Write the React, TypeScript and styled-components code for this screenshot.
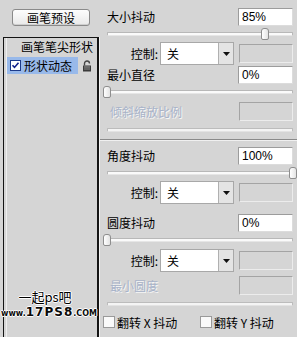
import styled, { createGlobalStyle } from 'styled-components'

const BG = '#d5d5d5'
const CJK = `'Noto Sans CJK SC', 'Noto Sans', sans-serif`

const GlobalStyle = createGlobalStyle`
	html, body {
		margin: 0;
		padding: 0;
		background: ${BG};
	}
	body {
		font-family: ${CJK};
		font-size: 12px;
		color: #000;
	}
`

type Param = { label: string; value: string; level: number }

const SliderBar = ({ level, muted }: { level?: number; muted?: boolean }) => (
	<SliderRow $muted={muted}>
		<Track />
		{level !== undefined && <Thumb style={{ left: `calc(${level}% - 4px)` }} />}
	</SliderRow>
)

const ParamRow = ({ label, value }: { label: string; value: string }) => (
	<LabelRow>
		<Label>{label}</Label>
		<ValueBox>{value}</ValueBox>
	</LabelRow>
)

const ControlRow = ({ top }: { top?: number }) => (
	<Control $top={top}>
		<ControlLabel>控制:</ControlLabel>
		<Select>
			<SelectText>关</SelectText>
			<SelectArrow>
				<svg width='7' height='4' viewBox='0 0 7 4'>
					<path d='M0 0h7L3.5 4z' fill='#111' />
				</svg>
			</SelectArrow>
		</Select>
		<DisabledBox />
	</Control>
)

const LockIcon = () => (
	<svg width='10' height='12' viewBox='0 0 10 12'>
		<path d='M2.5 5.5V3.5a2.5 2.5 0 0 1 5 0' stroke='#444' strokeWidth='1.4' fill='none' />
		<rect x='1' y='5.5' width='8' height='6' fill='#3a3a3a' />
		<rect x='2' y='6.5' width='6' height='1' fill='#9a9a9a' />
		<rect x='2' y='8.5' width='6' height='1' fill='#8a8a8a' />
	</svg>
)

const CheckMark = () => (
	<svg width='11' height='11' viewBox='0 0 11 11'>
		<rect x='0.5' y='0.5' width='10' height='10' fill='#fff' stroke='#1c3a8a' />
		<path d='M2.5 5.2l2 2.2 4-4.6' stroke='#10208a' strokeWidth='1.6' fill='none' />
	</svg>
)

export default function App() {
	const size: Param = { label: '大小抖动', value: '85%', level: 85 }
	const angle: Param = { label: '角度抖动', value: '100%', level: 100 }
	const roundness: Param = { label: '圆度抖动', value: '0%', level: 0 }

	return (
		<>
			<GlobalStyle />
			<Root>
				<LeftColumn>
					<PresetButton>画笔预设</PresetButton>
					<BrushPanel>
						<TipRow>画笔笔尖形状</TipRow>
						<DynamicsRow>
							<Highlight>
								<CheckMark />
								<span>形状动态</span>
							</Highlight>
							<LockIcon />
						</DynamicsRow>
						<Watermark>
							<WatermarkTitle>一起ps吧</WatermarkTitle>
							<WatermarkUrl>
								<small>www.</small>
								<b>17PS8</b>
								<small>.COM</small>
							</WatermarkUrl>
						</Watermark>
					</BrushPanel>
				</LeftColumn>

				<RightColumn>
					<ParamRow label={size.label} value={size.value} />
					<SliderBar level={size.level} />
					<ControlRow />
					<ParamRow label='最小直径' value='0%' />
					<SliderBar level={0} />
					<DisabledRow>
						<DisabledLabel>倾斜缩放比例</DisabledLabel>
						<DisabledBox />
					</DisabledRow>
					<SliderBar muted />
					<Separator />
					<ParamRow label={angle.label} value={angle.value} />
					<SliderBar level={angle.level} />
					<ControlRow />
					<Spacer $h={9} />
					<ParamRow label={roundness.label} value={roundness.value} />
					<SliderBar level={roundness.level} />
					<ControlRow top={1} />
					<DisabledRow $top={2}>
						<DisabledLabel>最小圆度</DisabledLabel>
						<DisabledBox />
					</DisabledRow>
					<SliderBar muted />
					<FlipRow>
						<FlipItem>
							<Box />
							翻转 X 抖动
						</FlipItem>
						<FlipItem>
							<Box />
							翻转 Y 抖动
						</FlipItem>
					</FlipRow>
				</RightColumn>
			</Root>
		</>
	)
}

const Root = styled.div`
	display: flex;
	width: 297px;
	height: 337px;
	overflow: hidden;
	background: ${BG};
`

const LeftColumn = styled.div`
	width: 100px;
	flex-shrink: 0;
	display: flex;
	flex-direction: column;
`

const PresetButton = styled.div`
	margin: 9px 0 0 12px;
	width: 76px;
	height: 15px;
	border: 1px solid #8a8a8a;
	border-radius: 3px;
	background: linear-gradient(#fdfdfd, #e9e9e9);
	box-shadow: inset 0 -1px 0 #cfcfcf;
	display: flex;
	align-items: center;
	justify-content: center;
	font-size: 12px;
	line-height: 1;
`

const BrushPanel = styled.div`
	margin: 11px 0 0 3px;
	width: 93px;
	flex: 1;
	border: 1px solid #141414;
	border-right-width: 2px;
	border-bottom: none;
	box-shadow: inset 2px 0 0 ${BG}, inset 3px 0 0 #eeeeee, 1px 0 0 #f2f2f2;
	display: flex;
	flex-direction: column;
`

const TipRow = styled.div`
	height: 18px;
	line-height: 18px;
	text-align: right;
	padding-right: 4px;
`

const DynamicsRow = styled.div`
	display: flex;
	align-items: center;
	height: 17px;
	margin: 1px 0 0 3px;
	gap: 4px;
`

const Highlight = styled.div`
	width: 68px;
	height: 17px;
	padding-left: 3px;
	background: #98b9ea;
	display: flex;
	align-items: center;
	gap: 3px;
`

const Watermark = styled.div`
	margin: auto 0 17px -3px;
	display: flex;
	flex-direction: column;
	align-items: center;
	gap: 3px;
	text-shadow: 1px 0 0 #fff, -1px 0 0 #fff, 0 1px 0 #fff, 0 -1px 0 #fff;
`

const WatermarkTitle = styled.div`
	font-size: 13px;
	line-height: 13px;
	margin-left: -8px;
`

const WatermarkUrl = styled.div`
	font-family: 'DejaVu Sans', sans-serif;
	line-height: 12px;
	white-space: nowrap;
	color: #0a0a0a;
	small {
		font-size: 8px;
		font-weight: bold;
	}
	b {
		font-size: 12px;
		letter-spacing: 1px;
	}
`

const RightColumn = styled.div`
	flex: 1;
	display: flex;
	flex-direction: column;
	padding: 7px 4px 0 7px;
	border-top: 1px solid #8c8c8c;
	box-sizing: border-box;
	margin-top: -1px;
`

const LabelRow = styled.div`
	display: flex;
	align-items: center;
	justify-content: space-between;
	height: 19px;
`

const Label = styled.div`
	font-size: 12px;
`

const ValueBox = styled.div`
	width: 50px;
	height: 16px;
	padding-left: 3px;
	background: #fff;
	border: 1px solid #9c9c9c;
	border-right-color: #dcdcdc;
	border-bottom-color: #dcdcdc;
	font-family: 'Liberation Sans', Arial, sans-serif;
	font-size: 12px;
	line-height: 16px;
`

const SliderRow = styled.div<{ $muted?: boolean }>`
	position: relative;
	height: 16px;
	display: flex;
	align-items: center;
	opacity: ${(p) => (p.$muted ? 0.85 : 1)};
`

const Track = styled.div`
	flex: 1;
	height: 2px;
	background: #fafafa;
	border: 1px solid #b8b8b8;
	border-bottom-color: #e6e6e6;
	border-radius: 1px;
`

const Thumb = styled.div`
	position: absolute;
	top: 2px;
	width: 6px;
	height: 10px;
	background: linear-gradient(90deg, #ffffff, #e4e4e4);
	border: 1px solid #8e8e8e;
	border-radius: 3px 3px 2px 2px;
`

const Control = styled.div<{ $top?: number }>`
	display: flex;
	align-items: center;
	height: 23px;
	margin-top: ${(p) => p.$top ?? 0}px;
`

const ControlLabel = styled.div`
	width: 51px;
	text-align: right;
	margin-right: 2px;
`

const Select = styled.div`
	width: 72px;
	height: 21px;
	display: flex;
	background: #fff;
	border: 1px solid #a8a8a8;
`

const SelectText = styled.div`
	flex: 1;
	padding-left: 6px;
	line-height: 21px;
`

const SelectArrow = styled.div`
	width: 14px;
	border-left: 1px solid #b0b0b0;
	background: #e4e4e4;
	display: flex;
	align-items: center;
	justify-content: center;
`

const DisabledBox = styled.div`
	margin-left: auto;
	width: 52px;
	height: 17px;
	border: 1px solid #a4a4a4;
	border-right-color: #ececec;
	border-bottom-color: #ececec;
	background: ${BG};
`

const DisabledRow = styled.div<{ $top?: number }>`
	display: flex;
	align-items: center;
	height: 22px;
	margin-top: ${(p) => p.$top ?? 0}px;
`

const DisabledLabel = styled.div`
	color: #a8b3c9;
	margin-left: 3px;
	text-shadow: 1px 1px 0 #f6f6f6;
`

const Separator = styled.div`
	height: 1px;
	margin: 1px -4px 5px -7px;
	background: #8a8a8a;
	border-bottom: 1px solid #f0f0f0;
`

const Spacer = styled.div<{ $h: number }>`
	height: ${(p) => p.$h}px;
	flex-shrink: 0;
`

const FlipRow = styled.div`
	display: flex;
	align-items: center;
	height: 18px;
	margin: 1px 0 0 -4px;
	gap: 24px;
`

const FlipItem = styled.div`
	display: flex;
	align-items: center;
	gap: 2px;
	width: 73px;
	white-space: nowrap;
`

const Box = styled.div`
	width: 10px;
	height: 10px;
	background: #fafafa;
	border: 1px solid #9a9a9a;
	flex-shrink: 0;
`
